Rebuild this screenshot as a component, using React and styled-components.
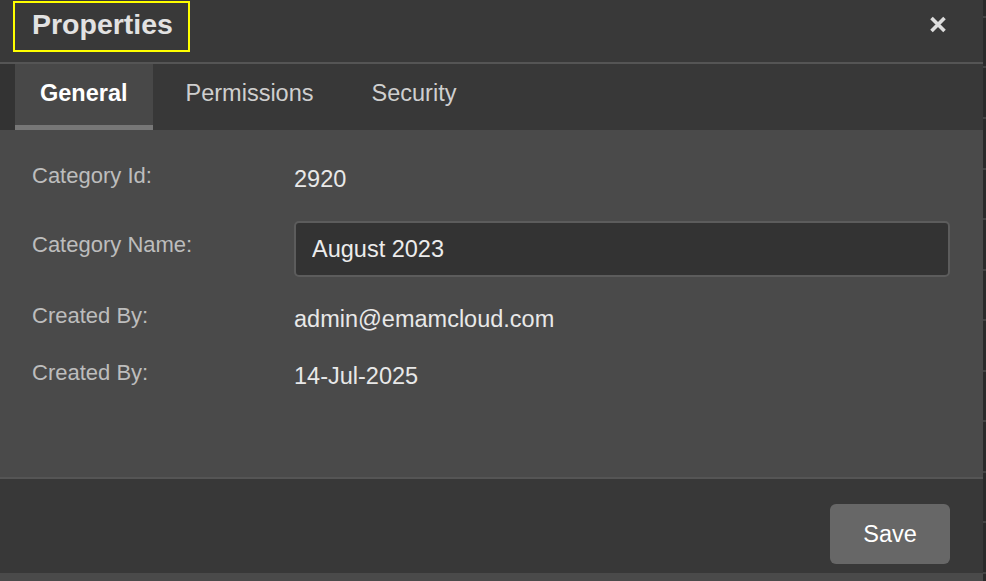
import React from 'react';
import styled, { createGlobalStyle } from 'styled-components';

const GlobalStyle = createGlobalStyle`
  html, body {
    margin: 0;
    padding: 0;
    background: #2a2a2a;
    font-family: "Liberation Sans", Arial, sans-serif;
  }
`;

// ------------------- Styled Components -------------------
const Page = styled.div`
  display: flex;
  height: 581px;
  overflow: hidden;
`;

const Column = styled.div`
  width: 983px;
  display: flex;
  flex-direction: column;
  background: #4a4a4a;
`;

const Backdrop = styled.div`
  flex: 1;
  background-color: #2a2a2a;
  background-image: repeating-linear-gradient(
    to bottom,
    transparent 0,
    transparent 16px,
    #444 16px,
    #444 18px,
    transparent 18px,
    transparent 50.5px
  );
`;

const Dialog = styled.div`
  display: flex;
  flex-direction: column;
  background: #393939;
`;

const Header = styled.header`
  height: 64px;
  box-sizing: border-box;
  padding: 1px 36px 0 13px;
  display: flex;
  align-items: flex-start;
  justify-content: space-between;
  border-bottom: 2px solid #555;
`;

const Title = styled.h1`
  margin: 0;
  width: 177px;
  height: 51px;
  box-sizing: border-box;
  border: 2px solid #ffff00;
  padding: 5px 0 0 17px;
  font-size: 28.5px;
  line-height: 32px;
  font-weight: bold;
  color: #e2e2e2;
`;

const CloseButton = styled.button`
  margin-top: 15px;
  padding: 0;
  border: 0;
  background: none;
  color: #ddd;
  cursor: pointer;
  display: flex;
`;

const TabBar = styled.nav`
  height: 66px;
  background: #333;
  padding-left: 15px;
  display: flex;
`;

const TabList = styled.div`
  flex: 1;
  display: flex;
  gap: 8px;
  background: #383838;
`;

const Tab = styled.button`
  border: 0;
  border-bottom: 5px solid ${p => (p.$active ? '#777' : 'transparent')};
  background: ${p => (p.$active ? '#484848' : 'transparent')};
  color: ${p => (p.$active ? '#fff' : '#cfcfcf')};
  font-family: inherit;
  font-size: 23.5px;
  font-weight: ${p => (p.$active ? 'bold' : 'normal')};
  padding: 0 25px 2px;
  cursor: pointer;
`;

const Content = styled.section`
  height: 349px;
  box-sizing: border-box;
  background: #4a4a4a;
  border-bottom: 2px solid #555;
  padding: 34px 33px 0 32px;
  display: flex;
  flex-direction: column;
  gap: 27px;
`;

const Row = styled.div`
  display: grid;
  grid-template-columns: 262px 1fr;
  align-items: start;
`;

const Label = styled.label`
  font-size: 22px;
  line-height: 23px;
  color: #bdbdbd;
  margin-top: ${p => p.$offset || 0}px;
`;

const Value = styled.div`
  font-size: 23.5px;
  line-height: 30px;
  color: #e8e8e8;
`;

const TextInput = styled.input`
  height: 56px;
  box-sizing: border-box;
  width: 100%;
  background: #333;
  border: 2px solid #5c5c5c;
  border-radius: 5px;
  padding: 0 16px;
  color: #ececec;
  font-family: inherit;
  font-size: 23.5px;
  outline: none;
`;

const Footer = styled.footer`
  height: 94px;
  box-sizing: border-box;
  padding: 25px 33px 0;
  display: flex;
  justify-content: flex-end;
  align-items: flex-start;
  background: #383838;
`;

const SaveButton = styled.button`
  width: 120px;
  height: 60px;
  border: 0;
  border-radius: 6px;
  background: #676767;
  color: #fff;
  font-family: inherit;
  font-size: 23.5px;
  cursor: pointer;
`;
// -----------------------------------------------------------

const CloseIcon = () => (
  <svg width="18" height="17" viewBox="0 0 18 17">
    <path d="M2.5 2 L15.5 15 M15.5 2 L2.5 15" stroke="currentColor" strokeWidth="3.6" />
  </svg>
);

const tabs = ['General', 'Permissions', 'Security'];

const App = () => (
  <>
    <GlobalStyle />
    <Page>
      <Column>
        <Dialog>
          <Header>
            <Title>Properties</Title>
            <CloseButton aria-label="Close">
              <CloseIcon />
            </CloseButton>
          </Header>
          <TabBar>
            <TabList>
              {tabs.map(t => (
                <Tab key={t} $active={t === 'General'}>{t}</Tab>
              ))}
            </TabList>
          </TabBar>
          <Content>
            <Row>
              <Label>Category Id:</Label>
              <Value>2920</Value>
            </Row>
            <Row>
              <Label $offset={12}>Category Name:</Label>
              <TextInput defaultValue="August 2023" />
            </Row>
            <Row>
              <Label>Created By:</Label>
              <Value>admin@emamcloud.com</Value>
            </Row>
            <Row>
              <Label>Created By:</Label>
              <Value>14-Jul-2025</Value>
            </Row>
          </Content>
          <Footer>
            <SaveButton>Save</SaveButton>
          </Footer>
        </Dialog>
      </Column>
      <Backdrop />
    </Page>
  </>
);

export default App;
